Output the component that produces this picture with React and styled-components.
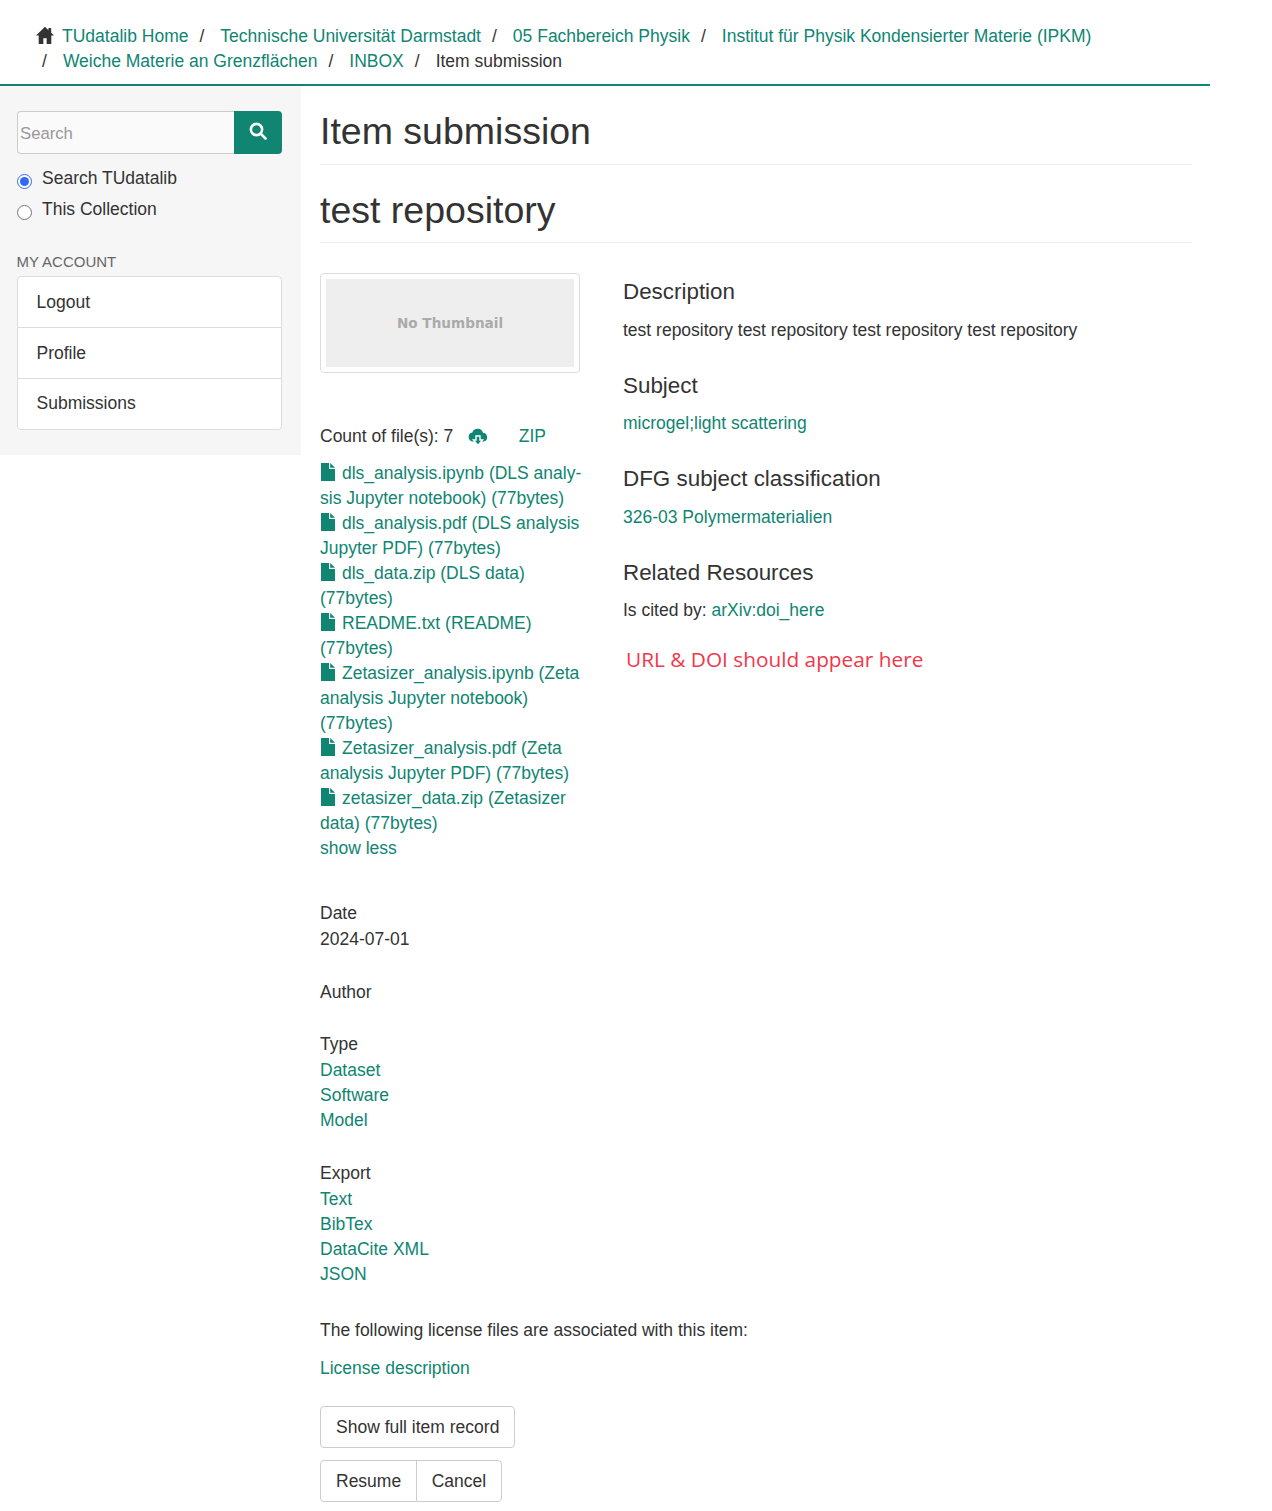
import React from 'react'
import styled, { createGlobalStyle } from 'styled-components'

const GlobalStyle = createGlobalStyle`
  * { box-sizing: border-box; }
  body {
    margin: 0;
    background: #fff;
    color: #333;
    font-family: "Liberation Sans", Arial, sans-serif;
    font-size: 17.5px;
    line-height: 25px;
  }
  a { color: #0f8572; text-decoration: none; }
`

const HomeIcon = () => (
  <svg width="18" height="18" viewBox="0 0 24 24" fill="#333">
    <path d="M12 1 0 12.8h3.6V24h6.2v-7.6h4.4V24h6.2V12.8H24l-3.8-3.7V2.6h-3.6v3z" />
  </svg>
)

const SearchIcon = () => (
  <svg width="18" height="18" viewBox="0 0 24 24" fill="none" stroke="#fff" strokeWidth="3.4" strokeLinecap="round">
    <circle cx="10" cy="10" r="7.5" />
    <path d="M16 16l6 6" />
  </svg>
)

const FileIcon = () => (
  <FileSvg width="16" height="18" viewBox="0 0 16 18" fill="#0f8572">
    <path d="M1 0h8v6h6v12H1z" />
    <path d="M10.2 0 15 4.8h-4.8z" />
  </FileSvg>
)

const CloudIcon = () => (
  <svg width="20" height="18" viewBox="0 0 20 18">
    <path fill="#0f8572" d="M5 13.5a4.6 4.6 0 0 1-.7-9.1A5.6 5.6 0 0 1 15 4.8a4.4 4.4 0 0 1 .6 8.7z" />
    <path fill="#0f8572" stroke="#fff" strokeWidth="1.4" d="M8 8h4v4h2.6L10 17.4 5.4 12H8z" />
  </svg>
)

const crumbs = [
  'Technische Universität Darmstadt',
  '05 Fachbereich Physik',
  'Institut für Physik Kondensierter Materie (IPKM)',
  'Weiche Materie an Grenzflächen',
  'INBOX',
]

const files = [
  'dls_analysis.ipynb (DLS analy\u00ADsis Jupyter notebook) (77bytes)',
  'dls_analysis.pdf (DLS analysis Jupyter PDF) (77bytes)',
  'dls_data.zip (DLS data) (77bytes)',
  'README.txt (README) (77bytes)',
  'Zetasizer_analysis.ipynb (Zeta analysis Jupyter notebook) (77bytes)',
  'Zetasizer_analysis.pdf (Zeta analysis Jupyter PDF) (77bytes)',
  'zetasizer_data.zip (Zetasizer data) (77bytes)',
]

function App() {
  return (
    <Page>
      <GlobalStyle />
      <Breadcrumb>
        <HomeCrumb>
          <HomeIcon />
          <a href="#">TUdatalib Home</a>
        </HomeCrumb>
        {crumbs.map((c) => (
          <CrumbItem key={c}>
            <Slash>/</Slash>
            <a href="#">{c}</a>
          </CrumbItem>
        ))}
        <CrumbItem>
          <Slash>/</Slash>
          <span>Item submission</span>
        </CrumbItem>
      </Breadcrumb>
      <Columns>
        <Sidebar>
          <SearchRow>
            <SearchInput placeholder="Search" />
            <SearchButton><SearchIcon /></SearchButton>
          </SearchRow>
          <RadioRow>
            <input type="radio" name="scope" defaultChecked />
            <span>Search TUdatalib</span>
          </RadioRow>
          <RadioRow>
            <input type="radio" name="scope" />
            <span>This Collection</span>
          </RadioRow>
          <SideHeading>MY ACCOUNT</SideHeading>
          <ListGroup>
            <ListItem>Logout</ListItem>
            <ListItem>Profile</ListItem>
            <ListItem>Submissions</ListItem>
          </ListGroup>
        </Sidebar>
        <Main>
          <PageTitle>Item submission</PageTitle>
          <PageTitle>test repository</PageTitle>
          <ItemRow>
            <LeftCol>
              <Thumbnail><ThumbInner>No Thumbnail</ThumbInner></Thumbnail>
              <CountRow>
                <span>Count of file(s): 7</span>
                <CloudIcon />
                <a href="#">ZIP</a>
              </CountRow>
              <FileList>
                {files.map((f) => (
                  <div key={f}>
                    <FileIcon />
                    <a href="#">{f}</a>
                  </div>
                ))}
                <a href="#">show less</a>
              </FileList>
            </LeftCol>
            <RightCol>
              <SubHeading>Description</SubHeading>
              <Para>test repository test repository test repository test repository</Para>
              <SubHeading>Subject</SubHeading>
              <Para><a href="#">microgel;light scattering</a></Para>
              <SubHeading>DFG subject classification</SubHeading>
              <Para><a href="#">326-03 Polymermaterialien</a></Para>
              <SubHeading>Related Resources</SubHeading>
              <Para>Is cited by: <a href="#">arXiv:doi_here</a></Para>
              <Note>URL &amp; DOI should appear here</Note>
            </RightCol>
          </ItemRow>
          <MetaBlock $top={39}>
            <div>Date</div>
            <div>2024-07-01</div>
          </MetaBlock>
          <MetaBlock $top={27}><div>Author</div></MetaBlock>
          <MetaBlock $top={24.5}>
            <div>Type</div>
            <MetaLink href="#">Dataset</MetaLink>
            <MetaLink href="#">Software</MetaLink>
            <MetaLink href="#">Model</MetaLink>
          </MetaBlock>
          <MetaBlock $top={27.5}>
            <div>Export</div>
            <MetaLink href="#">Text</MetaLink>
            <MetaLink href="#">BibTex</MetaLink>
            <MetaLink href="#">DataCite XML</MetaLink>
            <MetaLink href="#">JSON</MetaLink>
          </MetaBlock>
          <LicenseText>The following license files are associated with this item:</LicenseText>
          <LicenseLink href="#">License description</LicenseLink>
          <FullRecord>Show full item record</FullRecord>
          <ButtonGroup>
            <GroupButton>Resume</GroupButton>
            <GroupButton>Cancel</GroupButton>
          </ButtonGroup>
        </Main>
      </Columns>
    </Page>
  )
}

const Page = styled.div`
  width: 1210px;
  min-height: 1511px;
`

const Breadcrumb = styled.nav`
  display: flex;
  flex-wrap: wrap;
  align-content: flex-start;
  height: 86px;
  padding: 24px 36px 0;
  border-bottom: 2px solid #0f8572;
`

const HomeCrumb = styled.div`
  display: flex;
  align-items: center;
  gap: 8px;
  margin-right: 5px;
  svg { margin-top: -4px; }
`

const CrumbItem = styled.div`
  margin-right: 5px;
`

const Slash = styled.span`
  margin: 0 16px 0 6px;
`

const Columns = styled.div`
  display: flex;
  align-items: flex-start;
`

const Sidebar = styled.aside`
  width: 301px;
  flex: none;
  padding: 25px 19px 25px 17px;
  background: #f6f6f6;
`

const SearchRow = styled.div`
  display: flex;
  height: 43px;
  margin-bottom: 9px;
`

const SearchInput = styled.input`
  flex: 1;
  min-width: 0;
  padding: 2px 2px 0;
  border: 1px solid #ccc;
  border-right: 0;
  border-radius: 4px 0 0 4px;
  background: #fafafa;
  font: 16.7px "Liberation Sans", Arial, sans-serif;
  &::placeholder { color: #999; }
`

const SearchButton = styled.button`
  width: 48px;
  border: 0;
  border-radius: 0 4px 4px 0;
  background: #0f8572;
`

const RadioRow = styled.label`
  display: flex;
  align-items: center;
  gap: 10px;
  height: 31px;
  input { width: 15px; height: 15px; margin: 5px 0 0; accent-color: #3367f5; }
`

const SideHeading = styled.div`
  margin: 26px 0 0 -0.5px;
  font-size: 15px;
  line-height: 21px;
  color: #666;
`

const ListGroup = styled.div`
  margin-top: 4px;
  border: 1px solid #ddd;
  border-radius: 4px;
  background: #fff;
`

const ListItem = styled.div`
  height: 51px;
  padding: 13px 18.5px;
  &:not(:last-child) { border-bottom: 1px solid #ddd; }
  &:last-child { height: 50px; padding-top: 12px; }
`

const Main = styled.main`
  flex: 1;
  min-width: 0;
  padding: 0 18px 0 19px;
`

const PageTitle = styled.h1`
  margin: 0;
  padding-top: 22px;
  height: 78px;
  border-bottom: 1px solid #eee;
  font-size: 37.5px;
  line-height: 46px;
  font-weight: 400;
  &:first-child { height: 79px; }
  & + & { margin-bottom: 30px; }
`

const ItemRow = styled.div`
  display: flex;
  gap: 43px;
`

const LeftCol = styled.div`
  width: 260px;
  flex: none;
`

const RightCol = styled.div`
  flex: 1;
`

const Thumbnail = styled.div`
  height: 100px;
  padding: 5px;
  border: 1px solid #ddd;
  border-radius: 4px;
`

const ThumbInner = styled.div`
  display: flex;
  align-items: center;
  justify-content: center;
  height: 100%;
  background: #eee;
  color: #aaa;
  font-family: "DejaVu Sans", sans-serif;
  font-size: 13.6px;
  font-weight: 700;
`

const CountRow = styled.div`
  display: flex;
  align-items: center;
  gap: 15px;
  margin-top: 51px;
  height: 25px;
  a { margin-left: 15.5px; }
`

const FileList = styled.div`
  margin: 12px -4px 0 0;
  hyphens: manual;
`

const FileSvg = styled.svg`
  margin-right: 6px;
  vertical-align: -2px;
`

const SubHeading = styled.h3`
  margin: 0;
  font-size: 22.4px;
  line-height: 38px;
  font-weight: 400;
`

const Para = styled.p`
  margin: 6.5px 0 24px;
`

const Note = styled.div`
  margin: -3px 0 0 3px;
  color: #f0384a;
  font-family: "Open Sans", sans-serif;
  font-size: 20.8px;
  line-height: 30px;
`

const MetaBlock = styled.div`
  margin-top: ${(p) => p.$top}px;
  line-height: 25px;
  & > div:first-child { line-height: 27px; }
`

const MetaLink = styled.a`
  display: block;
`

const LicenseText = styled.p`
  margin: 30.5px 0 0;
`

const LicenseLink = styled.a`
  display: block;
  margin-top: 13px;
`

const FullRecord = styled.button`
  display: block;
  height: 42px;
  margin-top: 25.5px;
  padding: 0 15px;
  border: 1px solid #ccc;
  border-radius: 4px;
  background: #fff;
  color: #333;
  font: 17.5px "Liberation Sans", Arial, sans-serif;
`

const ButtonGroup = styled.div`
  display: flex;
  margin-top: 12px;
`

const GroupButton = styled.button`
  height: 42px;
  padding: 0 15px;
  border: 1px solid #ccc;
  background: #fff;
  color: #333;
  font: 17.5px "Liberation Sans", Arial, sans-serif;
  &:first-child { border-radius: 4px 0 0 4px; }
  &:last-child { border-radius: 0 4px 4px 0; margin-left: -1px; padding: 0 14.5px; }
`

export default App
